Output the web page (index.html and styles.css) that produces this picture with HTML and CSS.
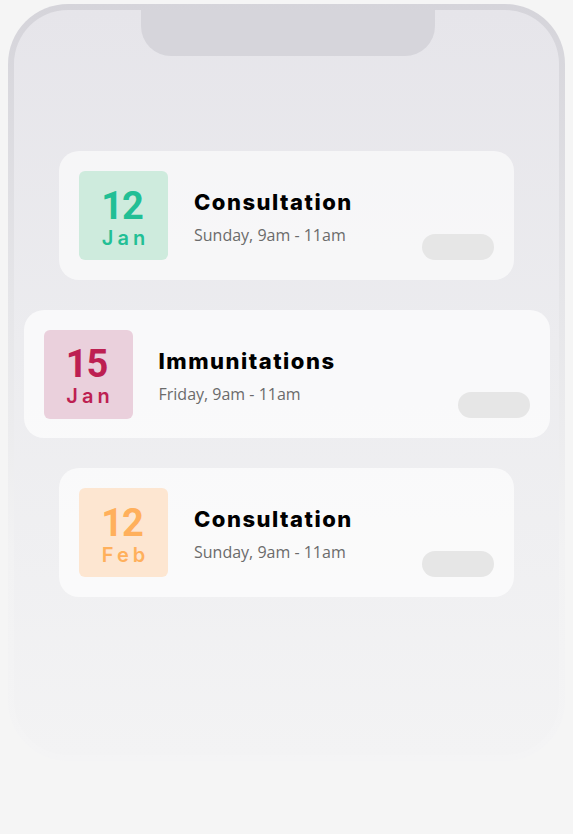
FILE: index.html
```html
<!DOCTYPE html>
<html lang="en">
<head>
<meta charset="utf-8">
<title>Appointments</title>
<link rel="stylesheet" href="styles.css">
</head>
<body>
  <div class="phone">
    <div class="screen">
      <div class="notch"></div>
      <div class="list">
        <div class="card">
          <div class="date date--green">
            <span class="day">12</span>
            <span class="month">Jan</span>
          </div>
          <div class="info">
            <div class="title">Consultation</div>
            <div class="time">Sunday, 9am - 11am</div>
          </div>
          <div class="pill"></div>
        </div>
        <div class="card card--wide">
          <div class="date date--pink">
            <span class="day">15</span>
            <span class="month">Jan</span>
          </div>
          <div class="info">
            <div class="title">Immunitations</div>
            <div class="time">Friday, 9am - 11am</div>
          </div>
          <div class="pill"></div>
        </div>
        <div class="card card--light">
          <div class="date date--orange">
            <span class="day">12</span>
            <span class="month">Feb</span>
          </div>
          <div class="info">
            <div class="title">Consultation</div>
            <div class="time">Sunday, 9am - 11am</div>
          </div>
          <div class="pill"></div>
        </div>
      </div>
    </div>
  </div>
</body>
</html>
```

FILE: styles.css
```css
* { box-sizing: border-box; }

html, body {
  margin: 0;
  padding: 0;
  background: #f5f5f5;
}

body {
  font-family: "Inter", "Noto Sans", sans-serif;
}

.phone {
  margin: 4px 0 0 8px;
  width: 557px;
  height: 757px;
  padding: 6px;
  border-radius: 60px;
  background: linear-gradient(to bottom, #d5d4da 0%, #e6e6e9 40%, #f2f2f3 72%, #f4f4f5 100%);
}

.screen {
  height: 100%;
  border-radius: 54px;
  background: linear-gradient(to bottom, #e6e5ea 0%, #ececef 45%, #f3f3f4 100%);
  display: flex;
  flex-direction: column;
  align-items: center;
}

.notch {
  width: 294px;
  height: 46px;
  margin-left: 2px;
  background: #d6d5db;
  border-radius: 0 0 30px 30px;
}

.list {
  margin-top: 95px;
  display: flex;
  flex-direction: column;
  align-items: center;
  gap: 30px;
}

.card {
  width: 455px;
  height: 129px;
  padding: 20px;
  border-radius: 20px;
  background: rgba(255, 255, 255, 0.6);
  display: flex;
  align-items: center;
}

.card--wide {
  width: 526px;
  height: 128px;
  background: rgba(255, 255, 255, 0.68);
}

.card--light {
  background: rgba(255, 255, 255, 0.65);
}

.date {
  width: 89px;
  height: 89px;
  flex: none;
  border-radius: 6px;
  display: flex;
  flex-direction: column;
  align-items: center;
  justify-content: center;
  padding-top: 2px;
}

.day {
  font-family: "Roboto", "Inter", sans-serif;
  font-weight: 700;
  font-size: 38px;
  line-height: 42px;
  letter-spacing: -1px;
  margin-left: -3px;
}

.month {
  font-family: "Inter", sans-serif;
  font-weight: 600;
  font-size: 20px;
  line-height: 22px;
  letter-spacing: 4px;
  margin-left: 4px;
}

.date--green { background: #ceebdd; color: #22bf95; }
.date--pink { background: #ead0dc; color: #bd1f52; }
.date--orange { background: #fde6d1; color: #ffb05c; }

.info {
  flex: 1;
  margin-left: 26px;
  padding-top: 4px;
  display: flex;
  flex-direction: column;
  gap: 10px;
}

.title {
  font-family: "Inter", sans-serif;
  font-weight: 800;
  font-size: 22px;
  line-height: 26px;
  letter-spacing: 1.5px;
  color: #000;
}

.time {
  font-family: "Open Sans", sans-serif;
  font-size: 16px;
  line-height: 21px;
  color: #6b6b6b;
}

.pill {
  align-self: flex-end;
  flex: none;
  width: 72px;
  height: 26px;
  border-radius: 13px;
  background: #e6e6e6;
}
```
